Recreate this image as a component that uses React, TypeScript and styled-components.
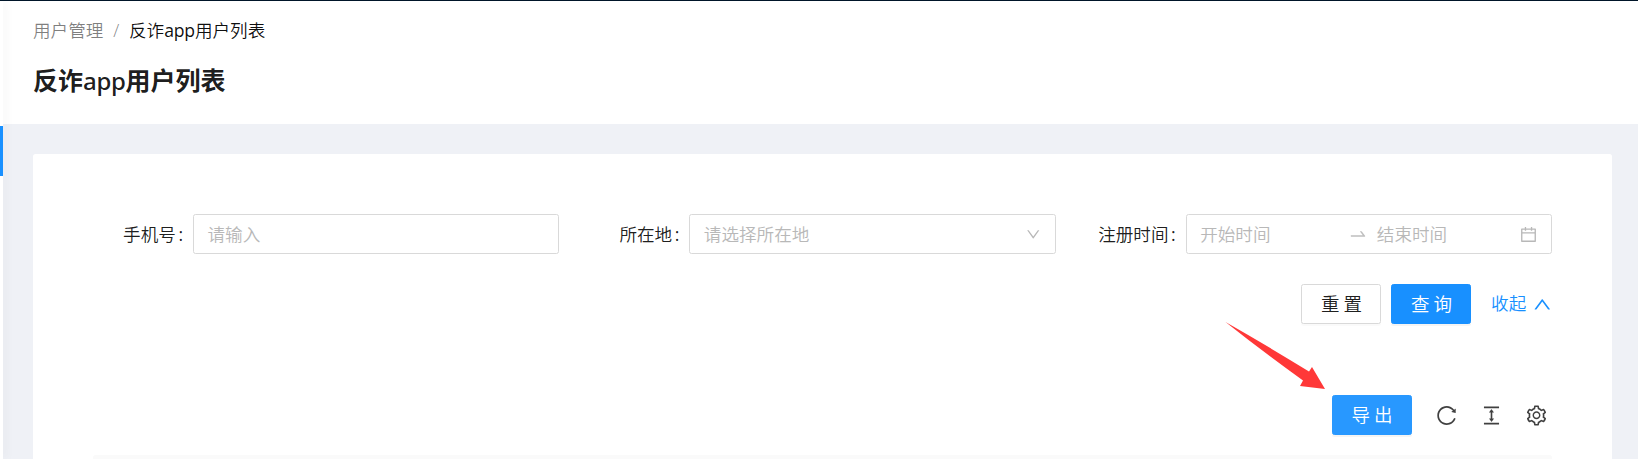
import React from 'react';
import styled, { createGlobalStyle, css } from 'styled-components';
import {
  AiOutlineCalendar,
  AiOutlineColumnHeight,
  AiOutlineDown,
  AiOutlineReload,
  AiOutlineSetting,
  AiOutlineSwapRight,
  AiOutlineUp,
} from 'react-icons/ai';

const GlobalStyle = createGlobalStyle`
  *, *::before, *::after { box-sizing: border-box; }
  body {
    margin: 0;
    overflow: hidden;
    background: #f0f2f5;
    color: rgba(0, 0, 0, 0.9);
    font-family: 'Open Sans', 'Noto Sans CJK SC', sans-serif;
    font-size: 17.6px;
    font-weight: 350;
    line-height: 27.5px;
  }
  svg { display: block; flex: none; }
`;

const Page = styled.div`
  display: flex;
  height: 459px;
  overflow: hidden;
  border-top: 1px solid #001529;
  background: #eff1f6;
`;

const Sider = styled.aside`
  flex: none;
  width: 3px;
  padding-top: 125px;
  background: #fff;
  box-shadow: 2.5px 0 10px rgba(29, 35, 41, 0.07);
  z-index: 1;
`;

const ActiveMark = styled.div`
  height: 50px;
  background: #1890ff;
`;

const Main = styled.main`
  flex: 1;
  min-width: 0;
`;

const Header = styled.header`
  height: 123px;
  padding: 16px 30px 0;
  background: #fff;
`;

const Breadcrumb = styled.nav`
  display: flex;
  color: rgba(0, 0, 0, 0.5);
`;

const Separator = styled.span`
  width: 25.6px;
  text-align: center;
`;

const Current = styled.span`
  color: rgba(0, 0, 0, 0.95);
`;

const Latin = styled.span<{ $heading?: boolean }>`
  ${(p) =>
    p.$heading
      ? css`
          font-family: 'Noto Sans', sans-serif;
          font-size: 24px;
          font-weight: 500;
          letter-spacing: -0.3px;
        `
      : css`
          font-weight: 400;
          letter-spacing: -0.2px;
        `}
`;

const Title = styled.h1`
  margin: 15px 0 0;
  font-size: 25px;
  font-weight: 600;
  line-height: 40px;
`;

const Card = styled.section`
  width: 1579px;
  height: 320px;
  margin: 30px 0 0 30px;
  padding: 60px 60px 0;
  border-radius: 2.5px;
  background: #fff;
`;

const Fields = styled.div`
  display: grid;
  grid-template-columns: repeat(3, 1fr);
  column-gap: 30px;
`;

const Field = styled.div`
  display: flex;
  align-items: center;
`;

const Label = styled.label`
  display: flex;
  justify-content: flex-end;
  width: 100px;
  padding-top: 1px;
  white-space: nowrap;
`;

const Colon = styled.span`
  margin: 0 10px 0 2.5px;
  font-weight: 400;
`;

const Control = styled.div`
  display: flex;
  flex: 1;
  align-items: center;
  height: 40px;
  padding: 0 13.5px;
  border: 1px solid #d9d9d9;
  border-radius: 2.5px;
  color: #b8b8b8;
`;

const Placeholder = styled.span`
  flex: 1;
  padding-top: 1px;
`;

const RangeArrow = styled.span`
  display: flex;
  justify-content: center;
  width: 40px;
  margin-right: -1px;
  color: #bfbfbf;
`;

const RangeEnd = styled(Placeholder)`
  flex: 1 1 4px;
`;

const Actions = styled.div<{ $top: number; $gap: number; $end?: number }>`
  display: flex;
  justify-content: flex-end;
  align-items: center;
  gap: ${(p) => p.$gap}px;
  height: 40px;
  margin-top: ${(p) => p.$top}px;
  padding-right: ${(p) => p.$end ?? 0}px;
`;

const Button = styled.button<{ $tone?: 'primary' | 'hover' }>`
  width: 80px;
  height: 40px;
  padding: 0;
  border: 1px solid #d9d9d9;
  border-radius: 2.5px;
  background: #fff;
  color: rgba(0, 0, 0, 0.9);
  font: inherit;
  font-size: 18.5px;
  letter-spacing: 4px;
  text-indent: 5px;
  box-shadow: 0 2px 0 rgba(0, 0, 0, 0.02);
  ${(p) =>
    p.$tone &&
    css`
      border-color: ${p.$tone === 'hover' ? '#2898ff' : '#1890ff'};
      background: ${p.$tone === 'hover' ? '#2898ff' : '#1890ff'};
      color: #fff;
      box-shadow: 0 2px 0 rgba(0, 0, 0, 0.045);
    `}
`;

const Collapse = styled.a`
  display: flex;
  align-items: center;
  gap: 6px;
  margin: 0 -0.8px 0 10px;
  color: #1890ff;
`;

const Tools = styled.div`
  display: flex;
  gap: 22px;
  color: rgba(0, 0, 0, 0.75);
`;

const TableHead = styled.div`
  height: 10px;
  margin-top: 20px;
  border-radius: 2.5px 2.5px 0 0;
  background: #fafafa;
`;

const Pointer = styled.svg`
  position: absolute;
  left: 1224px;
  top: 320px;
`;

export default function App() {
  return (
    <>
      <GlobalStyle />
      <Page>
        <Sider>
          <ActiveMark />
        </Sider>
        <Main>
          <Header>
            <Breadcrumb>
              <span>用户管理</span>
              <Separator>/</Separator>
              <Current>
                反诈<Latin>app</Latin>用户列表
              </Current>
            </Breadcrumb>
            <Title>
              反诈<Latin $heading>app</Latin>用户列表
            </Title>
          </Header>
          <Card>
            <Fields>
              <Field>
                <Label>
                  手机号<Colon>:</Colon>
                </Label>
                <Control>
                  <Placeholder>请输入</Placeholder>
                </Control>
              </Field>
              <Field>
                <Label>
                  所在地<Colon>:</Colon>
                </Label>
                <Control>
                  <Placeholder>请选择所在地</Placeholder>
                  <AiOutlineDown size={16.5} />
                </Control>
              </Field>
              <Field>
                <Label>
                  注册时间<Colon>:</Colon>
                </Label>
                <Control>
                  <Placeholder>开始时间</Placeholder>
                  <RangeArrow>
                    <AiOutlineSwapRight size={20} />
                  </RangeArrow>
                  <RangeEnd>结束时间</RangeEnd>
                  <AiOutlineCalendar size={19} />
                </Control>
              </Field>
            </Fields>
            <Actions $top={30} $gap={10}>
              <Button>重置</Button>
              <Button $tone="primary">查询</Button>
              <Collapse>
                收起
                <AiOutlineUp size={20.5} />
              </Collapse>
            </Actions>
            <Actions $top={71} $gap={23.5} $end={4}>
              <Button $tone="hover">导出</Button>
              <Tools>
                <AiOutlineReload size={23} />
                <AiOutlineColumnHeight size={23} />
                <AiOutlineSetting size={23} />
              </Tools>
            </Actions>
            <TableHead />
          </Card>
        </Main>
      </Page>
      <Pointer width="104" height="72" viewBox="0 0 104 72">
        <path d="M1.5 2 Q42 25 85 51.5 L88 47 L101 69 L76 66 L79 60.5 Q38 31 1.5 2 Z" fill="#ff3838" />
      </Pointer>
    </>
  );
}
